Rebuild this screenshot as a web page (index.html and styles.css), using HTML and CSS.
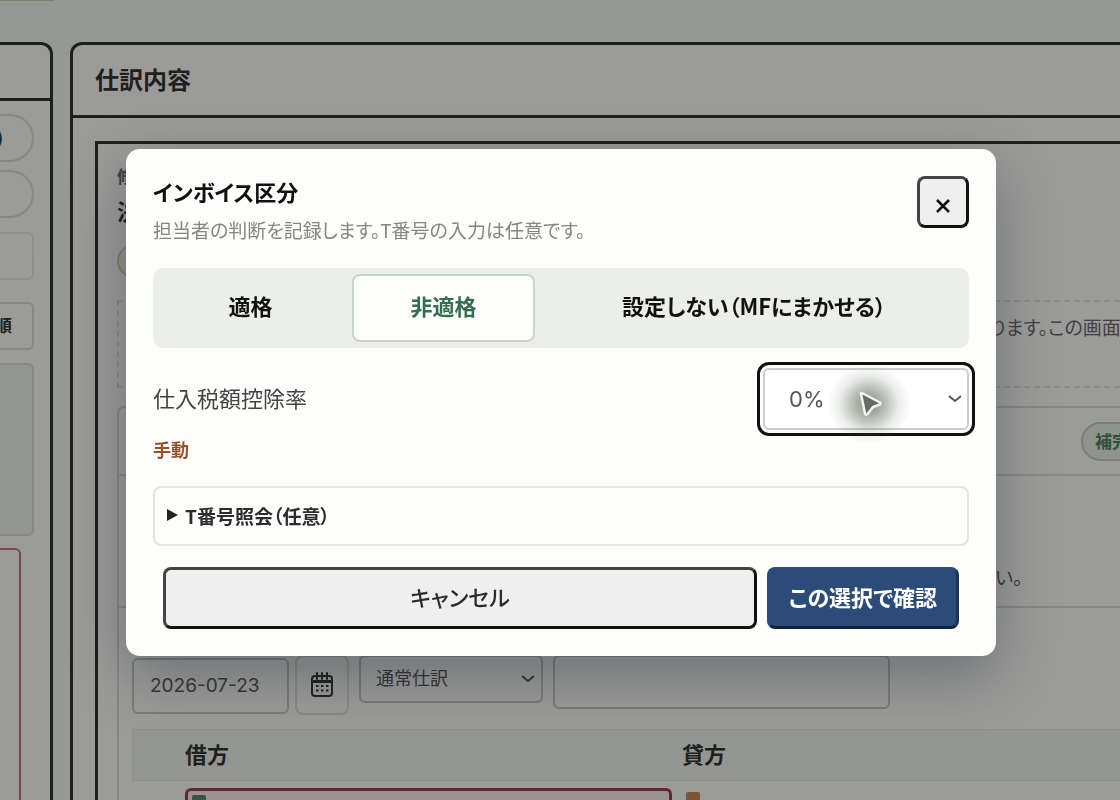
FILE: index.html
```html
<!DOCTYPE html>
<html lang="ja">
<head>
    <meta charset="utf-8">
    <title>仕訳内容</title>
    <link rel="stylesheet" href="styles.css">
</head>
<body>
    <div class="topbar"><span class="tab"></span></div>
    <main class="workspace">
        <aside class="panel side">
            <div class="side-head"></div>
            <div class="side-body">
                <div class="pill">)</div>
                <div class="pill"></div>
                <div class="side-search"></div>
                <button class="sort">順</button>
                <div class="side-summary"></div>
                <div class="side-card"></div>
            </div>
        </aside>

        <section class="panel detail">
            <h2 class="detail-title">仕訳内容</h2>
            <div class="entry">
                <div class="entry-head">
                    <div class="entry-label">修</div>
                    <div class="entry-name">決</div>
                    <span class="entry-tag"></span>
                </div>
                <p class="note">ります。この画面</p>
                <div class="card">
                    <div class="card-head"><span class="badge">補完</span></div>
                    <p class="card-text">い。</p>
                    <div class="form-row">
                        <input class="date" type="text" value="2026-07-23" aria-label="日付">
                        <button class="calendar" aria-label="カレンダー">
                            <svg width="24" height="26" viewBox="0 0 24 26" fill="none" stroke="currentColor" stroke-width="2">
                                <rect x="2" y="4" width="20" height="20" rx="3"/>
                                <path d="M2 9.500H22" stroke-width="3"/>
                                <path d="M7 1v6M12 1v6M17 1v6" stroke-linecap="round"/>
                                <path d="M6 14h2.500M11 14h2.500M16 14h2.500M6 18.500h2.500M11 18.500h2.500M16 18.500h2.500"/>
                            </svg>
                        </button>
                        <select class="kind" aria-label="仕訳種別"><option>通常仕訳</option></select>
                        <input class="memo" type="text" aria-label="摘要">
                    </div>
                    <div class="ledger">
                        <div class="ledger-head"><span>借方</span><span>貸方</span></div>
                        <div class="ledger-row">
                            <div class="debit"><span class="mark green"></span></div>
                            <div class="credit"><span class="mark orange"></span></div>
                        </div>
                    </div>
                </div>
            </div>
        </section>
    </main>

    <div class="overlay">
        <div class="modal" role="dialog" aria-modal="true" aria-labelledby="modalTitle">
            <header class="modal-head">
                <div>
                    <h3 id="modalTitle">インボイス区分</h3>
                    <p>担当者の判断を記録します。T番号の入力は任意です。</p>
                </div>
                <button class="close" aria-label="閉じる">
                    <svg width="16" height="16" viewBox="0 0 16 16" fill="none" stroke="currentColor" stroke-width="2.500"><path d="M2 2l12 12M14 2L2 14"/></svg>
                </button>
            </header>

            <div class="segments">
                <button>適格</button>
                <button class="active" aria-pressed="true">非適格</button>
                <button>設定しない（MFにまかせる）</button>
            </div>

            <div class="rate">
                <label for="rate">仕入税額控除率</label>
                <div class="rate-field">
                    <select id="rate"><option>0%</option></select>
                    <span class="glow"></span>
                    <svg class="cursor" width="24" height="28" viewBox="0 0 24 28"><path d="M3 3L21 12.500Q22 13.500 21 14.500L14 17L8.500 24Q6.500 25.500 6 23.500L2 4Q2 3 3 3Z" fill="#666b66" stroke="#f4f5f2" stroke-width="2.500" stroke-linejoin="round"/></svg>
                </div>
            </div>
            <p class="manual">手動</p>

            <details class="lookup">
                <summary>T番号照会（任意）</summary>
            </details>

            <footer class="actions">
                <button class="cancel">キャンセル</button>
                <button class="confirm">この選択で確認</button>
            </footer>
        </div>
    </div>
</body>
</html>
```

FILE: styles.css
```css
* { box-sizing: border-box; }
body { margin: 0; min-height: 100vh; overflow: hidden; background: #f6faf3; color: #2c2c2c; font-family: "Noto Sans CJK JP", sans-serif; font-feature-settings: "palt"; }
h2, h3, p { margin: 0; }
button, input, select { font: inherit; font-feature-settings: inherit; color: inherit; }
select { appearance: none; background: url("data:image/svg+xml,%3Csvg xmlns='http://www.w3.org/2000/svg' width='16' height='10' fill='none' stroke='%23555' stroke-width='2'%3E%3Cpath d='M2 2l6 5 6-5'/%3E%3C/svg%3E") no-repeat right 5px center; }

/* page */
.topbar { height: 42px; }
.tab { display: block; width: 54px; height: 1px; background: #cfd0a8; }
.workspace { display: grid; grid-template-columns: 53px 1fr; gap: 17px; height: calc(100vh - 42px); }
.panel { background: #fff; border: 3px solid #2a2a26; border-bottom: 0; overflow: hidden; }
.side { border-left: 0; border-radius: 0 12px 0 0; }
.side-head { height: 56px; border-bottom: 3px solid #2a2a26; }
.side-body { display: flex; flex-direction: column; padding: 13px 16px 0 0; }
.side-body > * { border: 2px solid #dcdcd8; border-left: 0; }
.pill { height: 48px; margin-bottom: 8px; border-radius: 0 24px 24px 0; font-size: 16px; font-weight: 700; line-height: 42px; text-indent: -3px; }
.side-search { height: 48px; margin: 6px 0 22px; border-radius: 0 6px 6px 0; opacity: 0.6; }
.sort { height: 48px; margin-bottom: 13px; padding: 0 20px 4px 0; border-radius: 0 6px 6px 0; background: #fff; font-size: 17px; font-weight: 700; text-align: right; direction: rtl; }
.side-summary { height: 173px; margin-bottom: 12px; border-radius: 0 6px 6px 0; background: #eff3ec; }
.side-body .side-card { height: 280px; margin-right: 13px; border-color: #b8767a; border-radius: 0 6px 0 0; }

.detail { border-right: 0; border-radius: 12px 0 0 0; }
.detail-title { height: 73px; padding-left: 22px; border-bottom: 3px solid #2a2a26; font-size: 24px; line-height: 68px; }
.entry { margin: 23px 0 0 22px; padding-left: 19px; border: 3px solid #2a2a26; border-width: 3px 0 0 3px; }
.entry-head { height: 156px; padding-top: 20px; font-weight: 700; }
.entry-label { color: #666; font-size: 17px; line-height: 24px; }
.entry-name { font-size: 22px; line-height: 44px; }
.entry-tag { display: block; width: 100px; height: 34px; margin-top: 12px; border: 2px solid #d4cfbc; border-radius: 17px; background: #f4f1e4; }
.note { height: 88px; padding-left: 871px; border: 2px dashed #e2e4e0; border-right: 0; color: #666; font-size: 19px; line-height: 50px; white-space: nowrap; }
.card { margin-top: 18px; border: 2px solid #dcdedb; border-width: 2px 0 0 2px; border-radius: 8px 0 0 0; }
.card-head { display: flex; height: 68px; padding: 14px 0 0 962px; border-bottom: 2px solid #dcdedb; }
.badge { flex: none; height: 39px; padding: 0 12px; border: 2px solid #bfd0c3; border-radius: 20px; background: #e9f1e8; color: #4a7f60; font-size: 17px; font-weight: 700; line-height: 33px; }
.card-text { height: 132px; padding: 85px 0 0 876px; border-bottom: 2px solid #dcdedb; color: #555; font-size: 19px; line-height: 32px; }
.form-row { display: flex; align-items: flex-start; padding: 47px 0 0 13px; color: #555; }
.form-row > * { border: 2px solid #c6c8c6; border-radius: 6px; background-color: #fff; }
.date { width: 157px; height: 56px; margin: 3px 6px 0 0; padding: 0 16px 2px; font: 19px Inter, sans-serif; }
.calendar { display: grid; place-items: center; width: 54px; height: 60px; margin-right: 10px; padding: 0; color: #333; }
.form-row .calendar { border-color: #e0e0de; border-radius: 8px; }
.kind { width: 184px; height: 48px; padding: 0 15px 4px; font-size: 18px; line-height: 26px; }
.memo { width: 337px; height: 54px; margin-left: 10px; }
.ledger { margin: 14px 0 0 13px; }
.ledger-head { display: grid; grid-template-columns: 497px 1fr; height: 52px; padding-left: 52px; background: #f2f6f2; border: 1px solid #e8eae6; border-right: 0; font-size: 22px; font-weight: 700; line-height: 46px; }
.ledger-row { display: grid; grid-template-columns: 487px 1fr; gap: 10px; padding: 7px 0 0 53px; }
.debit { height: 60px; padding: 4px; border: 3px solid #993c42; border-radius: 6px; background: #fff1f2; }
.credit { padding: 4px; }
.mark { display: block; width: 14px; height: 16px; border-radius: 2px; }
.green { background: #568767; }
.orange { background: #c98550; }

/* dialog */
.overlay { position: fixed; inset: 0; display: grid; place-items: center; padding: 5px 16px 0 18px; background: rgba(17, 17, 15, 0.42); }
.modal { width: 100%; max-width: 870px; padding: 27px; border-radius: 14px; background: #fdfdfb; box-shadow: 0 20px 60px rgba(0, 10, 20, 0.3); }
.modal-head { display: flex; justify-content: space-between; align-items: flex-start; height: 92px; }
.modal-head h3 { color: #111; font-size: 22px; line-height: 30px; }
.modal-head p { margin-top: 8px; color: #858783; font-size: 19px; line-height: 32px; }
.close { width: 52px; height: 52px; padding: 9px 0 0; border: 3px solid #111; border-top-color: #444; border-left-color: #444; border-radius: 8px; background: #efefef; color: #111; }
.segments { display: grid; grid-template-columns: 7fr 7fr 16fr; gap: 10px; padding: 6px; border-radius: 10px; background: #eceeea; }
.segments button { height: 68px; padding: 0 0 6px; border: 2px solid transparent; border-radius: 8px; background: none; color: #111; font-size: 22px; font-weight: 700; }
.segments .active { border-color: #c8d4ca; background: #fdfdfb; color: #356e4e; }
.rate { display: flex; justify-content: space-between; align-items: center; margin-top: 20px; color: #444; font-size: 22px; }
.rate label { padding-bottom: 4px; }
.rate-field { position: relative; }
.rate select { display: block; width: 206px; height: 62px; padding: 0 24px; border: 2px solid #ccc; border-radius: 6px; outline: 3px solid #111; outline-offset: 3px; background-color: #fff; background-position: right 4px center; color: #555; font-family: Inter, sans-serif; }
.glow { position: absolute; left: 64px; top: -4px; width: 84px; height: 80px; background: radial-gradient(closest-side, rgba(85, 100, 80, 0.65), rgba(85, 100, 80, 0.5) 30%, rgba(85, 100, 80, 0.12) 70%, transparent); pointer-events: none; }
.cursor { position: absolute; left: 96px; top: 22px; pointer-events: none; }
.manual { margin: 7px 0 25px; color: #9a4f2c; font-size: 18px; font-weight: 700; line-height: 24px; }
.lookup { border: 2px solid #e4e5e2; border-radius: 8px; }
.lookup summary { display: flex; align-items: center; gap: 7px; height: 56px; padding: 0 12px 2px; font-size: 19px; font-weight: 700; }
.lookup summary::before { content: ""; border: 6px solid transparent; border-left: 11px solid #222; border-right: 0; }
.actions { display: flex; gap: 10px; margin-top: 21px; padding: 0 10px; }
.actions button { height: 62px; padding: 0 0 5px; border: 3px solid #111; border-radius: 8px; font-size: 22px; }
.actions .cancel { flex: 1; border-top-color: #444; border-left-color: #444; background: #efefef; font-weight: 500; }
.actions .confirm { width: 192px; border-color: #2b4c78 #1b3354 #11233c #2b4c78; background: #2b4c78; color: #fff; font-weight: 700; }
```
